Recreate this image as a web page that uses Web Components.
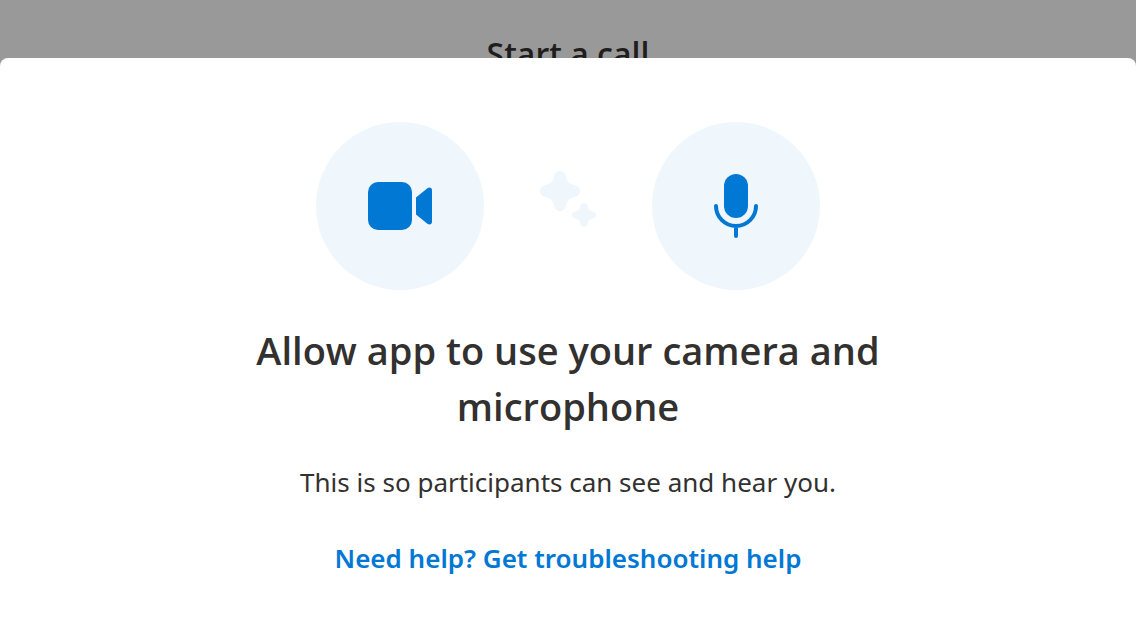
<!DOCTYPE html>
<html lang="en">
<head>
<meta charset="utf-8">
<meta name="viewport" content="width=device-width, initial-scale=1">
<title>Start a call</title>
<style>
html, body { margin: 0; min-height: 100%; background: #999999; }
body { font-family: "Segoe UI", "Noto Sans", "Open Sans", sans-serif; color: #323130; }
</style>
</head>
<body>
<call-page>
  <span slot="heading">Start a call</span>
  <permission-sheet>
    <device-badge slot="devices" kind="camera"></device-badge>
    <sparkle-mark slot="devices"></sparkle-mark>
    <device-badge slot="devices" kind="microphone"></device-badge>
    <span slot="title">Allow app to use your camera and microphone</span>
    <span slot="detail">This is so participants can see and hear you.</span>
    <span slot="help">Need help? Get troubleshooting help</span>
  </permission-sheet>
</call-page>
<script>
class BaseElement extends HTMLElement {
  connectedCallback() {
    if (this.shadowRoot) return;
    this.attachShadow({ mode: 'open' }).innerHTML = this.render();
  }
}

customElements.define('call-page', class extends BaseElement {
  render() {
    return `
      <style>
        :host { display: grid; min-height: 100vh; overflow: hidden; background: #999999; }
        h1, main { grid-area: 1 / 1; }
        h1 { margin: 0; padding-top: 32px; font-family: "Segoe UI", "Open Sans", sans-serif; font-size: 32px; line-height: 44px; font-weight: 600; text-align: center; color: #1f1e1d; }
        main { display: grid; margin-top: 58px; z-index: 1; }
      </style>
      <h1><slot name="heading"></slot></h1>
      <main><slot></slot></main>`;
  }
});

customElements.define('permission-sheet', class extends BaseElement {
  render() {
    return `
      <style>
        :host { display: block; }
        section { box-sizing: border-box; height: 100%; padding: 64px 32px; border-radius: 8px 8px 0 0; background: #ffffff;
          display: flex; flex-direction: column; align-items: center; text-align: center; }
        .devices { display: flex; align-items: center; gap: 56px; }
        h2 { margin: 32px 0 0; max-width: 720px; font-family: "Segoe UI", "Open Sans", sans-serif; font-size: 38px; line-height: 56px; font-weight: 600; }
        p { margin: 28px 0 0; font-size: 26px; line-height: 40px; }
        a { margin-top: 36px; font-size: 26px; line-height: 40px; font-weight: 600; color: #0078d4; text-decoration: none; }
        a:hover { text-decoration: underline; }
      </style>
      <section>
        <div class="devices"><slot name="devices"></slot></div>
        <h2><slot name="title"></slot></h2>
        <p><slot name="detail"></slot></p>
        <a href="#help"><slot name="help"></slot></a>
      </section>`;
  }
});

const deviceIcons = {
  camera: `<rect x="8" y="16" width="44" height="48" rx="10"/>
    <path d="M56 31.5 67.4 22.2C69.4 20.6 72 21.6 72 24.2V55.8C72 58.4 69.4 59.4 67.4 57.8L56 48.5Z"/>`,
  microphone: `<rect x="28" y="8" width="24" height="44" rx="12"/>
    <path d="M20 40A20 20 0 0 0 60 40M40 60V70" fill="none" stroke="currentColor" stroke-width="4" stroke-linecap="round"/>`
};

customElements.define('device-badge', class extends BaseElement {
  render() {
    return `
      <style>
        :host { display: grid; place-items: center; width: 168px; height: 168px; border-radius: 50%; background: #eff6fc; color: #0078d4; }
        svg { display: block; }
      </style>
      <svg width="80" height="80" viewBox="0 0 80 80" fill="currentColor" aria-hidden="true">${deviceIcons[this.getAttribute('kind')]}</svg>`;
  }
});

customElements.define('sparkle-mark', class extends BaseElement {
  render() {
    return `
      <style>
        :host { display: block; color: #eff6fc; }
        svg { display: block; margin-bottom: 14px; }
      </style>
      <svg width="56" height="56" viewBox="0 0 56 56" fill="currentColor" aria-hidden="true">
        <g id="star"><path d="M20 0C22.8 0 25 1.8 25.6 4L26.4 7C27.6 10.8 29.2 12.4 33 13.6L36 14.4C38.2 15 40 17.2 40 20S38.2 25 36 25.6L33 26.4C29.2 27.6 27.6 29.2 26.4 33L25.6 36C25 38.2 22.8 40 20 40S15 38.2 14.4 36L13.6 33C12.4 29.2 10.8 27.6 7 26.4L4 25.6C1.8 25 0 22.8 0 20S1.8 15 4 14.4L7 13.6C10.8 12.4 12.4 10.8 13.6 7L14.4 4C15 1.8 17.2 0 20 0Z"/></g>
        <use href="#star" transform="translate(32 32) scale(.6)"/>
      </svg>`;
  }
});
</script>
</body>
</html>
